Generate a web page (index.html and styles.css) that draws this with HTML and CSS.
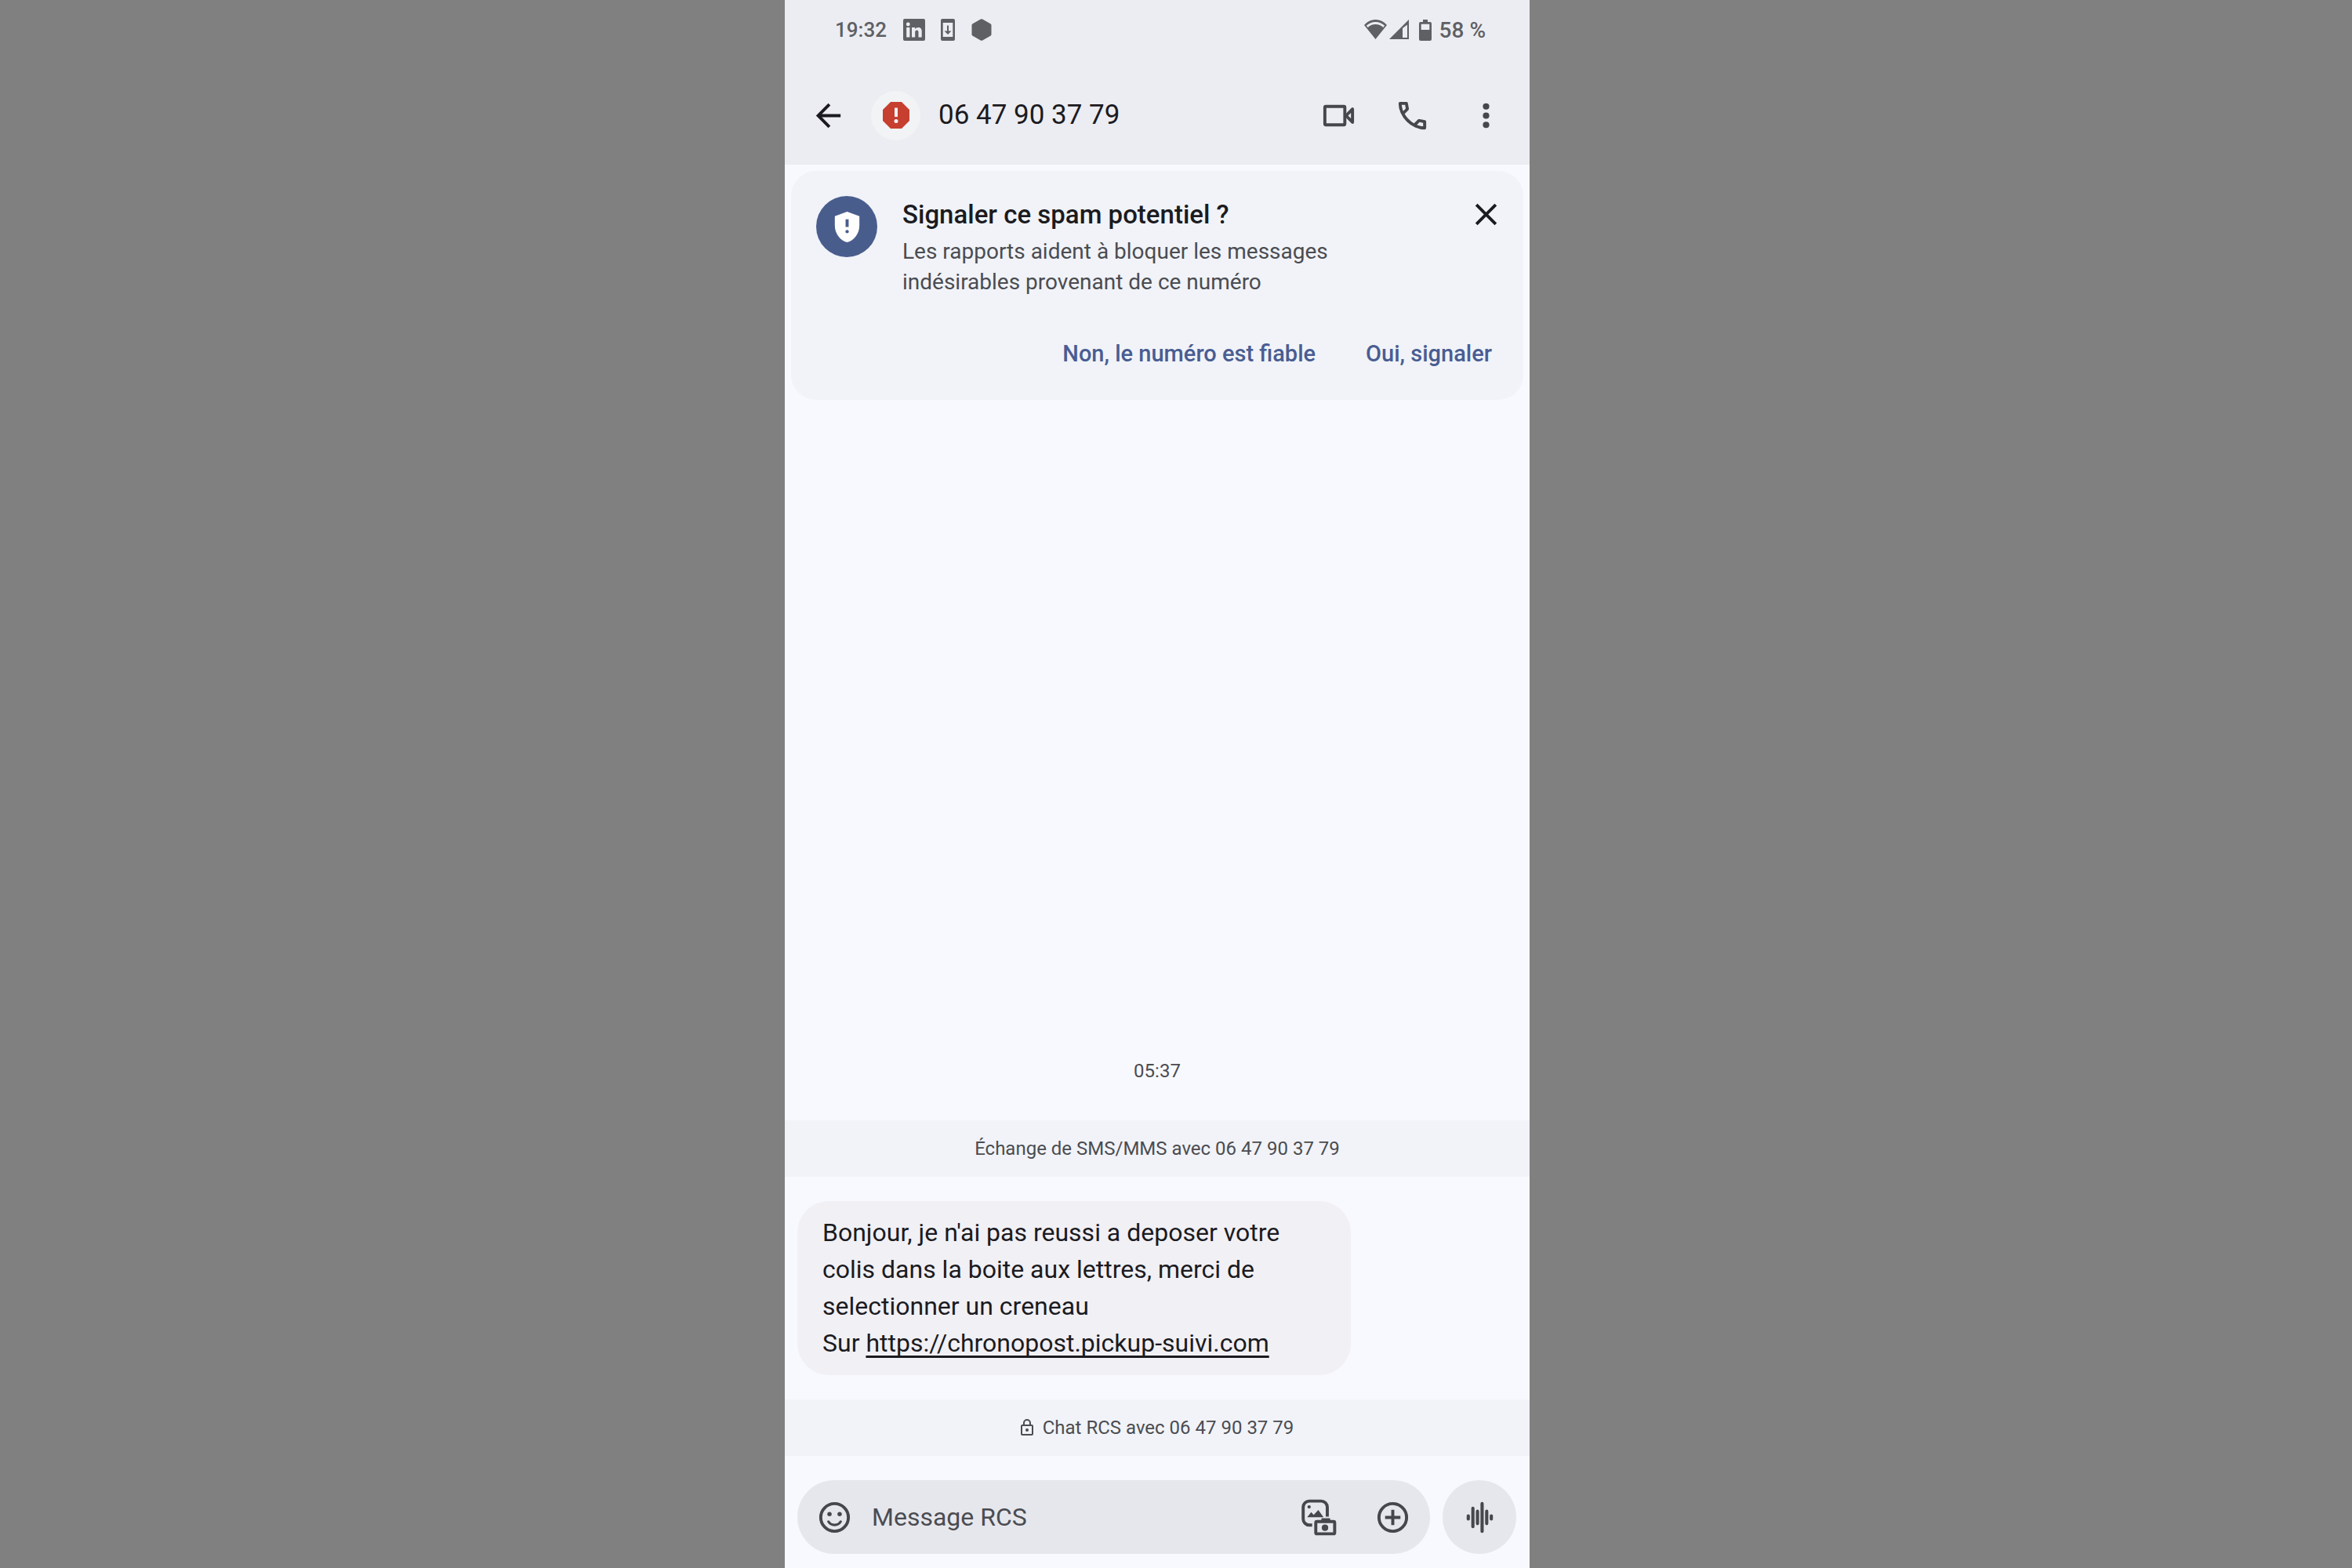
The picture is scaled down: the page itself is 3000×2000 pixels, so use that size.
FILE: index.html
```html
<!DOCTYPE html>
<html lang="fr">
<head>
<meta charset="utf-8">
<meta name="viewport" content="width=device-width, initial-scale=1">
<title>06 47 90 37 79</title>
<link rel="stylesheet" href="styles.css">
</head>
<body>
<div class="phone">
  <header class="header">
    <div class="status">
      <div class="status-left">
        <span class="clock">19:32</span>
        <svg class="status-icon" viewBox="0 0 28 28" aria-hidden="true"><path fill-rule="evenodd" d="M2 0h24a2 2 0 0 1 2 2v24a2 2 0 0 1-2 2H2a2 2 0 0 1-2-2V2a2 2 0 0 1 2-2zM4.2 11v12.5h4.2V11zM6.300 4.600a2.400 2.400 0 1 0 0 4.800a2.400 2.400 0 0 0 0-4.800zM11 11v12.500h4.200v-6.600c0-3.200 4.300-3.400 4.300 0v6.600h4.200v-7.900c0-5.600-6.300-5.800-8.500-2.700V11z"/></svg>
        <svg class="status-icon status-phone" viewBox="0 0 18 28" aria-hidden="true"><path fill-rule="evenodd" d="M2 0h14a2 2 0 0 1 2 2v24a2 2 0 0 1-2 2H2a2 2 0 0 1-2-2V2a2 2 0 0 1 2-2zM2.700 5v18h12.600V5z"/><path d="M8 8.500h2v7h3.500L9 20l-4.500-4.500H8z"/></svg>
        <svg class="status-icon" viewBox="0 0 28 28" aria-hidden="true"><path d="M12.800 .6q1.200-.7 2.400 0l10.100 5.700q1.200.7 1.200 2v11.400q0 1.300-1.200 2l-10.100 5.700q-1.200.7-2.400 0L2.700 21.700q-1.200-.7-1.200-2V8.300q0-1.300 1.200-2z"/></svg>
      </div>
      <div class="status-right">
        <svg class="wifi" viewBox="0 0 58 26" aria-hidden="true"><path fill-rule="evenodd" d="M0 7Q6 0 14.500 0T29 7L14.500 25zM2.800 7.800L4.800 10Q8.500 6 14.500 6T24.200 10L26.200 7.800Q21 3 14.500 3T2.800 7.800z"/><path fill-rule="evenodd" d="M57 0v25H32zM49 11v12h6V6.500z"/></svg>
        <svg class="battery" viewBox="0 0 16 27" aria-hidden="true"><path fill-rule="evenodd" d="M5 0h6v3h3a2 2 0 0 1 2 2v20a2 2 0 0 1-2 2H2a2 2 0 0 1-2-2V5a2 2 0 0 1 2-2h3zM2.700 5.800V13h10.600V5.800z"/></svg>
        <span class="charge">58 %</span>
      </div>
    </div>
    <div class="toolbar">
      <button class="tool back" type="button" aria-label="Retour"><svg class="icon" viewBox="0 0 24 24"><path d="M20 11H7.830l5.590-5.590L12 4l-8 8 8 8 1.410-1.410L7.830 13H20v-2z"/></svg></button>
      <span class="avatar"><svg class="alert" viewBox="0 0 34 34" aria-hidden="true"><path fill="#c63f2f" d="M10 0h14l10 10v14L24 34H10L0 24V10z"/><path fill="#f2f3f5" d="M15 7.500h4v11.500h-4zM17 22a2.500 2.500 0 1 0 0 5a2.500 2.500 0 0 0 0-5z"/></svg></span>
      <h1 class="contact">06 47 90 37 79</h1>
      <button class="tool" type="button" aria-label="Appel vidéo"><svg class="icon" viewBox="0 0 24 24"><g fill="none" stroke="currentColor" stroke-width="2" stroke-linejoin="round"><rect x="3" y="6" width="13" height="12" rx=".6"/><path d="M16.800 12L21 7.700v8.600z"/></g></svg></button>
      <button class="tool" type="button" aria-label="Appeler"><svg class="icon" viewBox="0 0 24 24"><path d="M19.950 21q-3.125 0-6.175-1.363t-5.550-3.862q-2.500-2.500-3.863-5.550T3 4.050q0-.45.3-.75t.75-.3H8.100q.35 0 .625.238t.325.562l.65 3.500q.05.4-.025.675T9.400 8.450L6.975 10.900q.5.925 1.187 1.787t1.513 1.663q.775.775 1.625 1.438T13.100 17l2.350-2.350q.225-.225.588-.338t.712-.062l3.450.7q.35.1.575.363T21 15.900v4.050q0 .45-.3.75t-.75.3ZM6.025 9l1.650-1.650L7.250 5H5.025q.125 1.025.35 2.025T6.025 9Zm8.950 8.950q.975.425 1.988.675T19 18.950v-2.200l-2.350-.475-1.675 1.675Z"/></svg></button>
      <button class="tool" type="button" aria-label="Plus d'options"><svg class="icon" viewBox="0 0 24 24"><circle cx="12" cy="6" r="2.100"/><circle cx="12" cy="12" r="2.100"/><circle cx="12" cy="18" r="2.100"/></svg></button>
    </div>
  </header>

  <section class="card">
    <div class="card-main">
      <span class="shield"><svg class="icon" viewBox="0 0 24 24" aria-hidden="true"><path fill="#fff" d="M12 2l8 3v6.100c0 5.050-3.410 9.760-8 10.900-4.590-1.140-8-5.850-8-10.900V5z"/><path fill="#495d8d" d="M11 7h2v5h-2z"/><circle fill="#495d8d" cx="12" cy="15" r="1.100"/></svg></span>
      <div class="card-text">
        <h2 class="card-title">Signaler ce spam potentiel ?</h2>
        <p class="card-body">Les rapports aident à bloquer les messages indésirables provenant de ce numéro</p>
      </div>
      <button class="close" type="button" aria-label="Fermer"><svg class="icon" viewBox="0 0 24 24"><path d="M19 6.410L17.590 5 12 10.590 6.410 5 5 6.410 10.590 12 5 17.590 6.410 19 12 13.410 17.590 19 19 17.590 13.410 12z"/></svg></button>
    </div>
    <div class="card-actions">
      <button class="action" type="button">Non, le numéro est fiable</button>
      <button class="action" type="button">Oui, signaler</button>
    </div>
  </section>

  <main class="thread">
    <time class="time">05:37</time>
    <p class="band">Échange de SMS/MMS avec 06 47 90 37 79</p>
    <p class="bubble">Bonjour, je n'ai pas reussi a deposer votre colis dans la boite aux lettres, merci de selectionner un creneau<br>Sur <a class="link" href="#">https://chronopost.pickup-suivi.com</a></p>
    <p class="band"><svg class="lock" viewBox="0 0 16 22" aria-hidden="true"><g fill="none" stroke="currentColor" stroke-width="2"><rect x="1" y="8" width="14" height="12" rx="1"/><path d="M4 8V5a4 4 0 0 1 8 0v3"/></g><circle cx="8" cy="14" r="2"/></svg>Chat RCS avec 06 47 90 37 79</p>
  </main>

  <form class="composer">
    <div class="field">
      <button class="field-button" type="button" aria-label="Émojis"><svg class="icon" viewBox="0 0 24 24"><circle cx="12" cy="12" r="9" fill="none" stroke="currentColor" stroke-width="2"/><circle cx="8.700" cy="9.800" r="1.400"/><circle cx="15.300" cy="9.800" r="1.400"/><path d="M8 14.700q1.300 2.200 4 2.200t4-2.200" fill="none" stroke="currentColor" stroke-width="1.600" stroke-linecap="round"/></svg></button>
      <input class="message" type="text" placeholder="Message RCS" aria-label="Message RCS">
      <button class="field-button gallery" type="button" aria-label="Galerie et appareil photo"><svg class="icon" viewBox="0 0 48 48"><g fill="none" stroke="currentColor" stroke-width="4"><path d="M34.700 23V10.700a8 8 0 0 0-8-8H11.300a8 8 0 0 0-8 8V26a8 8 0 0 0 8 8H15"/><rect x="19.700" y="29.300" width="24.600" height="16" rx="1.500"/></g><path d="M27 26q0-1 1-1h9.500q1 0 1 1v3H27zM8.500 23.700l5.200-6.700 3.300 3.700 6-6.500 6.800 9.500z"/><circle cx="31.700" cy="37.500" r="4.200"/><circle cx="11" cy="10.300" r="2.200"/></svg></button>
      <button class="field-button" type="button" aria-label="Ajouter"><svg class="icon" viewBox="0 0 24 24"><circle cx="12" cy="12" r="9" fill="none" stroke="currentColor" stroke-width="2"/><path d="M11 7h2v4h4v2h-4v4h-2v-4H7v-2h4z"/></svg></button>
    </div>
    <button class="voice" type="button" aria-label="Message vocal"><svg class="icon" viewBox="0 0 24 24"><path d="M4.500 11v2M7.500 6v12M10.500 8v8M13.500 3v18M16.500 8v8M19.500 11v2" fill="none" stroke="currentColor" stroke-width="2.100" stroke-linecap="round"/></svg></button>
  </form>
</div>
</body>
</html>
```
FILE: styles.css
```css
* {
  box-sizing: border-box;
}

body {
  margin: 0;
  padding-right: 48px;
  background: #808080;
  color: #1b1b1f;
  font-family: Roboto, "Liberation Sans", sans-serif;
}

h1,
h2,
p {
  margin: 0;
  font-weight: 400;
}

button {
  display: flex;
  align-items: center;
  justify-content: center;
  flex: none;
  padding: 0;
  border: 0;
  background: none;
  color: inherit;
  font: inherit;
  cursor: pointer;
}

svg {
  display: block;
  flex: none;
  fill: currentColor;
}

.icon {
  width: 47px;
  height: 47px;
}

.phone {
  display: flex;
  flex-direction: column;
  max-width: 950px;
  min-height: 100vh;
  margin: 0 auto;
  background: #f8f9fe;
}

/* Status bar and toolbar */

.header {
  background: #ecedf2;
}

.status {
  display: flex;
  align-items: center;
  justify-content: space-between;
  height: 76px;
  padding: 0 56px 0 64px;
  color: #5f6064;
  font-size: 26px;
  font-weight: 500;
}

.status-left,
.status-right {
  display: flex;
  align-items: center;
}

.status-left {
  gap: 20px;
}

.clock {
  margin-right: 1px;
}

.status-icon {
  width: 28px;
  height: 28px;
}

.status-phone {
  width: 18px;
}

.wifi {
  width: 58px;
  height: 26px;
  margin-right: 12px;
}

.battery {
  width: 16px;
  height: 27px;
  margin-right: 10px;
}

.charge {
  font-size: 28px;
}

.toolbar {
  display: flex;
  align-items: center;
  height: 134px;
  padding: 8px 9px 0 8px;
}

.tool {
  width: 94px;
  height: 94px;
  color: #46474c;
}

.back {
  color: #1b1b1f;
}

.avatar {
  display: flex;
  align-items: center;
  justify-content: center;
  flex: none;
  width: 63px;
  height: 63px;
  margin: 0 23px 0 8px;
  border-radius: 50%;
  background: #f2f3f5;
}

.alert {
  width: 34px;
  height: 34px;
}

.contact {
  flex: 1;
  font-size: 35px;
  line-height: 48px;
}

/* Spam report card */

.card {
  margin: 8px 8px 0;
  padding: 32px 16px 23px 32px;
  border-radius: 32px;
  background: #f1f3f8;
}

.card-main {
  display: flex;
  align-items: flex-start;
  gap: 32px;
}

.shield {
  display: flex;
  align-items: center;
  justify-content: center;
  flex: none;
  width: 78px;
  height: 78px;
  border-radius: 50%;
  background: #495d8d;
}

.card-text {
  flex: 1;
}

.card-title {
  font-size: 33px;
  font-weight: 500;
  line-height: 47px;
}

.card-body {
  max-width: 600px;
  margin-top: 4px;
  color: #4b4c51;
  font-size: 28px;
  line-height: 39px;
}

.close {
  margin-right: 8px;
}

.card-actions {
  display: flex;
  justify-content: flex-end;
  gap: 16px;
  margin-top: 36px;
}

.action {
  height: 72px;
  padding: 0 24px;
  color: #495d92;
  font-size: 29px;
  font-weight: 500;
}

/* Conversation */

.thread {
  display: flex;
  flex: 1;
  flex-direction: column;
  justify-content: flex-end;
  gap: 31px;
  padding-bottom: 31px;
}

.time {
  margin-bottom: 16px;
  color: #4b4c51;
  font-size: 24px;
  line-height: 32px;
  text-align: center;
}

.band {
  display: flex;
  align-items: center;
  justify-content: center;
  gap: 12px;
  min-height: 72px;
  background: #f1f3f8;
  color: #4b4c51;
  font-size: 24px;
}

.lock {
  width: 16px;
  height: 22px;
}

.bubble {
  align-self: flex-start;
  max-width: 706px;
  margin: 0 16px;
  padding: 17px 32px;
  border-radius: 40px;
  background: #f1f0f5;
  font-size: 32px;
  line-height: 47px;
}

.link {
  color: inherit;
  text-decoration-thickness: 3px;
  text-decoration-skip-ink: none;
  text-underline-offset: 5px;
}

/* Composer */

.composer {
  display: flex;
  gap: 16px;
  padding: 0 17px 18px 16px;
  color: #46474c;
}

.field {
  display: flex;
  align-items: center;
  flex: 1;
  min-width: 0;
  height: 94px;
  padding: 0 24px;
  border-radius: 47px;
  background: #e6e7ec;
}

.message {
  flex: 1;
  min-width: 0;
  height: 94px;
  margin: 0 24px;
  padding: 0;
  border: 0;
  outline: 0;
  background: none;
  color: #1b1b1f;
  font: inherit;
  font-size: 32px;
}

.message::placeholder {
  color: #4b4c51;
  opacity: 1;
}

.gallery {
  margin-right: 47px;
}

.voice {
  width: 94px;
  height: 94px;
  border-radius: 50%;
  background: #e6e7ec;
}
```
